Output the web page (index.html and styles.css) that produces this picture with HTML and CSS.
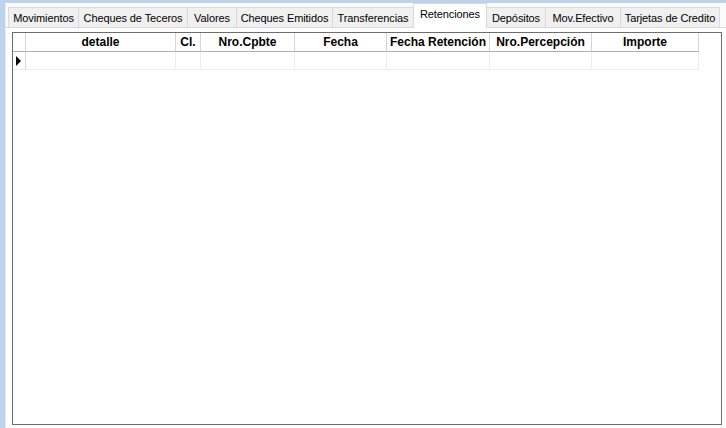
FILE: index.html
```html
<!DOCTYPE html>
<html>
<head>
<meta charset="utf-8">
<link rel="stylesheet" href="styles.css">
</head>
<body>
<div class="window">
  <div class="tabs">
    <div class="tab w-mov">Movimientos</div>
    <div class="tab w-cht">Cheques de Teceros</div>
    <div class="tab w-val">Valores</div>
    <div class="tab w-che">Cheques Emitidos</div>
    <div class="tab w-tra">Transferencias</div>
    <div class="tab w-ret active">Retenciones</div>
    <div class="tab w-dep">Depósitos</div>
    <div class="tab w-mef">Mov.Efectivo</div>
    <div class="tab w-tar">Tarjetas de Credito</div>
  </div>
  <div class="page">
    <div class="grid">
      <div class="gridrow head">
        <div class="cell rh"></div>
        <div class="cell">detalle</div>
        <div class="cell">Cl.</div>
        <div class="cell">Nro.Cpbte</div>
        <div class="cell">Fecha</div>
        <div class="cell">Fecha Retención</div>
        <div class="cell">Nro.Percepción</div>
        <div class="cell">Importe</div>
      </div>
      <div class="gridrow data">
        <div class="cell rh"><span class="arrow"></span></div>
        <div class="cell"></div>
        <div class="cell"></div>
        <div class="cell"></div>
        <div class="cell"></div>
        <div class="cell"></div>
        <div class="cell"></div>
        <div class="cell"></div>
      </div>
    </div>
  </div>
</div>
</body>
</html>
```
FILE: styles.css
```css
html, body {
  margin: 0;
  padding: 0;
}
body {
  background: #bcd3eb;
  width: 726px;
  height: 428px;
  overflow: hidden;
  font-family: "Liberation Sans", Arial, sans-serif;
}
.window {
  margin-left: 5px;
  margin-top: 3px;
  height: 425px;
  background: #ffffff;
  border-left: 1px solid #e4ecf6;
  display: flex;
  flex-direction: column;
}
.tabs {
  display: flex;
  align-items: flex-end;
  height: 24px;
  padding-left: 2px;
  background: #fbfbfb;
  border-bottom: 1px solid #d9d9d9;
}
.tab {
  height: 21px;
  box-sizing: border-box;
  margin-bottom: -1px;
  background: #f0f0f0;
  border: 1px solid #d9d9d9;
  border-right: none;
  font-size: 11px;
  letter-spacing: -0.1px;
  line-height: 20px;
  text-align: center;
  color: #000;
  white-space: nowrap;
}
.w-mov { width: 70px; }
.w-cht { width: 109px; }
.w-val { width: 49px; }
.w-che { width: 96px; }
.w-tra { width: 81px; }
.w-ret { width: 74px; }
.w-dep { width: 58px; }
.w-mef { width: 75px; }
.w-tar { width: 100px; }
.tab.active {
  height: 25px;
  background: #ffffff;
  border: 1px solid #d9d9d9;
  border-bottom: none;
  line-height: 21px;
}
.tab.active + .tab {
  border-left: none;
}
.tab:last-child {
  border-right: 1px solid #d9d9d9;
}
.page {
  flex: 1;
  padding: 4px 4px 4px 6px;
  background: #fff;
}
.grid {
  width: 710px;
  height: 393px;
  box-sizing: border-box;
  border: 1px solid #6e6e6e;
  background: #fff;
}
.gridrow {
  display: grid;
  grid-template-columns: 13px 150px 25px 94px 92px 103px 102px 107px;
  width: 686px;
}
.cell {
  box-sizing: border-box;
  border-right: 1px solid #e3e3e3;
  border-bottom: 1px solid #e3e3e3;
}
.head {
  height: 19px;
}
.head .cell {
  font-size: 12px;
  font-weight: bold;
  text-align: center;
  line-height: 18px;
  white-space: nowrap;
  border-bottom: 1px solid #b0b0b0;
  border-right: 1px solid #d5d5d5;
  background: #fff;
}
.data {
  height: 18px;
}
.data .cell {
  border-right: 1px solid #ececec;
  border-bottom: 1px solid #ececec;
}
.rh {
  display: flex;
  align-items: center;
  padding-left: 3px;
}
.data .rh {
  border-right: 1px solid #d5d5d5;
}
.arrow {
  width: 0;
  height: 0;
  border-top: 5px solid transparent;
  border-bottom: 5px solid transparent;
  border-left: 5px solid #000;
}
```
